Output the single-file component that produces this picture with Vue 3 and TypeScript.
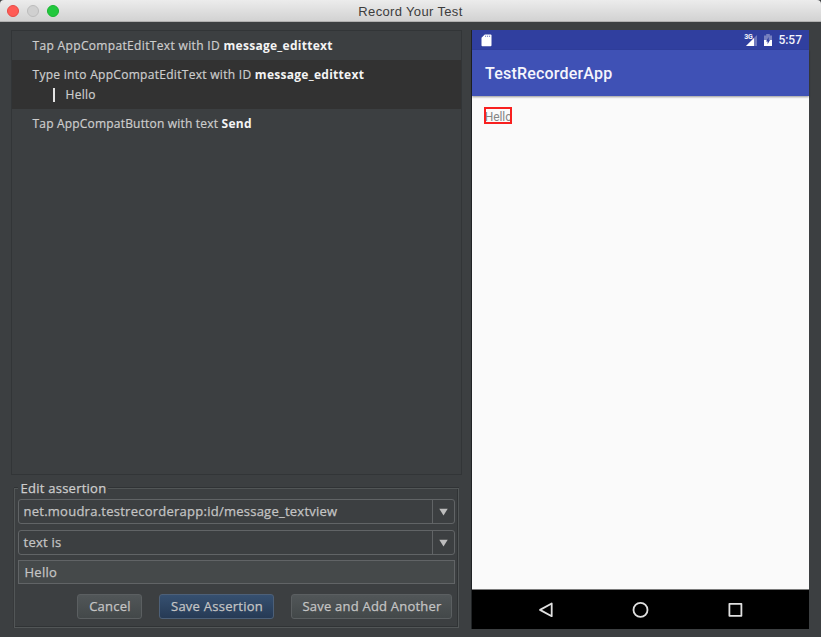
<script setup lang="ts">
interface Step {
  action: string
  target: string
  value?: string
}

const steps: Step[] = [
  { action: 'Tap AppCompatEditText with ID', target: 'message_edittext' },
  { action: 'Type into AppCompatEditText with ID', target: 'message_edittext', value: 'Hello' },
  { action: 'Tap AppCompatButton with text', target: 'Send' },
]

const combos: string[] = ['net.moudra.testrecorderapp:id/message_textview', 'text is']
</script>

<template>
  <div class="window">
    <header class="titlebar">
      <div class="lights">
        <i class="light red"></i>
        <i class="light grey"></i>
        <i class="light green"></i>
      </div>
      <span class="title">Record Your Test</span>
    </header>

    <main class="content">
      <section class="left">
        <div class="steps">
          <div v-for="(s, i) in steps" :key="i" class="step" :class="{ selected: s.value }">
            <div class="line"><span>{{ s.action }}&nbsp;</span><b>{{ s.target }}</b></div>
            <div v-if="s.value" class="line value">{{ s.value }}</div>
          </div>
        </div>

        <div class="group">
          <span class="legend">Edit assertion</span>
          <div v-for="c in combos" :key="c" class="combo">
            <span class="combo-text">{{ c }}</span>
            <span class="arrow">
              <svg width="9" height="8" viewBox="0 0 9 8"><path d="M0.3 0.8H8.7L4.5 7.5Z" fill="#bdbdbd" /></svg>
            </span>
          </div>
          <div class="field">Hello</div>
          <div class="buttons">
            <button class="btn cancel">Cancel</button>
            <button class="btn primary">Save Assertion</button>
            <button class="btn another">Save and Add Another</button>
          </div>
        </div>
      </section>

      <section class="device">
        <div class="status">
          <svg class="sd" width="11" height="13" viewBox="0 0 11 13">
            <path d="M3.8 0.5H9.6Q10.5 0.5 10.5 1.4V11.3Q10.5 12.2 9.6 12.2H1.4Q0.5 12.2 0.5 11.3V3.8Z" fill="#fff" />
            <path d="M4.6 1.6V3M6.6 1.6V3M8.6 1.6V3" stroke="#7f89c8" stroke-width="1" />
          </svg>
          <span class="net">3G</span>
          <svg class="signal" width="11" height="11" viewBox="0 0 11 11">
            <path d="M11 0V11H0Z" fill="#7079bd" />
            <path d="M8 3V11H0Z" fill="#fff" />
          </svg>
          <svg class="battery" width="8" height="12" viewBox="0 0 8 12">
            <path d="M0 1.5H2.2V0H5.8V1.5H8V6.5H0Z" fill="#7780bf" />
            <path d="M0 6H8V12H0Z" fill="#fff" />
            <path d="M4.7 3L2 7.4H3.6V10.2L6 6.1H4.7Z" fill="#303f9f" />
          </svg>
          <span class="clock">5:57</span>
        </div>
        <div class="appbar">TestRecorderApp</div>
        <div class="screen"><span class="marked">Hello</span></div>
        <nav class="nav">
          <svg width="16" height="18" viewBox="0 0 16 18"><path d="M13.7 2.5V15.2L2 8.9Z" /></svg>
          <svg width="18" height="18" viewBox="0 0 18 18"><circle cx="8.5" cy="8.9" r="7" /></svg>
          <svg width="16" height="18" viewBox="0 0 16 18"><rect x="1.4" y="2.8" width="12" height="12" /></svg>
        </nav>
      </section>
    </main>
  </div>
</template>

<style>
body { background: #3c3f41; overflow: hidden; }
</style>

<style scoped>
* { box-sizing: border-box; }
.window {
  width: 821px; height: 637px; background: #3c3f41;
  font-family: "Open Sans", "Noto Sans", sans-serif; color: #cdcdcd;
}
.titlebar {
  display: grid; grid-template-columns: 1fr auto 1fr; height: 22px;
  background: linear-gradient(#ececec, #d2d2d2);
  border-bottom: 1px solid #b0b0b0; border-radius: 4px 4px 0 0;
}
.lights { display: flex; gap: 8px; padding: 5px 0 0 7px; }
.light { width: 12px; height: 12px; border-radius: 50%; border: 1px solid; }
.red { background: #ff5c56; border-color: #e64a45; }
.grey { background: #d0d0d0; border-color: #bcbcbc; }
.green { background: #22c83e; border-color: #18b530; }
.title { font: 13px/23px "Liberation Sans", sans-serif; color: #3c3c3c; letter-spacing: 0.35px; }
.content { display: flex; gap: 10px; padding: 8px 12px 8px 11px; }
.left { width: 451px; }
.steps { height: 445px; border: 1px solid #323537; font-size: 12px; -webkit-text-stroke: 0.2px; }
.step { height: 30px; padding: 5px 0 0 20.5px; }
.step:first-child { height: 29px; letter-spacing: 0.34px; }
.step.selected { height: 49px; background: #323232; letter-spacing: 0.29px; }
.step:last-child { letter-spacing: 0.19px; }
.line { display: flex; height: 20px; line-height: 20px; white-space: nowrap; }
.line b { color: #f4f4f4; font-weight: 700; letter-spacing: 0.28px; -webkit-text-stroke: 0; }
.value { align-items: center; padding-left: 20px; }
.value::before { content: ""; width: 2px; height: 14px; margin-right: 11px; background: #e4e4e4; }
.group {
  position: relative; width: 445px; height: 140px; margin: 13px 0 0 3px; padding: 10px 4px 0 3px;
  border: 1px solid #525657; box-shadow: inset 0 -1px #303335, inset -1px 0 #303335, 0 -1px #303335, -1px 0 #37393b;
  font-size: 13px; letter-spacing: 0.25px; -webkit-text-stroke: 0.25px;
}
.legend {
  position: absolute; left: 3px; top: -11px; height: 20px; padding: 0 2px 0 2.5px; line-height: 20px;
  background: #3c3f41; white-space: nowrap;
}
.combo, .field { width: 437px; border: 1px solid #616466; color: #c4c4c4; white-space: nowrap; }
.combo { display: flex; height: 25px; margin-bottom: 6px; border-radius: 3px; line-height: 23px; }
.combo-text { flex: 1; padding-left: 4.5px; }
.arrow { display: flex; width: 22px; align-items: center; justify-content: center; border-left: 1px solid #616466; }
.field { height: 24px; margin-top: -1px; padding-left: 5.5px; line-height: 22px; background: #45494a; }
.buttons { display: flex; justify-content: flex-end; gap: 17px; padding: 10px 2px 0 0; }
.btn {
  height: 25px; padding: 0 0 2px 1px; border: 1px solid #5b5f61; border-radius: 3px;
  background: linear-gradient(#515658, #434849); color: #c4c4c4; font: inherit; letter-spacing: inherit; white-space: nowrap;
}
.cancel { width: 65px; }
.primary { width: 115px; background: linear-gradient(#365070, #263a55); border-color: #4d6078; }
.another { width: 161px; letter-spacing: 0.22px; }
.device { width: 337px; height: 599px; background: #fafafa; font-family: Roboto, sans-serif; box-shadow: -1px 0 #202325; }
.status { display: flex; height: 20px; align-items: center; padding: 0 7px 0 9px; background: #303f9f; color: #f4f4fb; }
.net { margin-left: auto; align-self: flex-start; padding-top: 4px; font-size: 7px; line-height: 7px; font-weight: 700; letter-spacing: -0.3px; }
.signal { margin-left: -6px; }
.battery { margin: 0 6px 0 7px; }
.clock { font-size: 12px; font-weight: 500; }
.appbar {
  position: relative; height: 46px; padding-left: 13px; background: #3f51b5; color: #f5f5fc;
  font-size: 16px; line-height: 47px; font-weight: 500; letter-spacing: 0.2px; box-shadow: 0 1px 2px rgba(0, 0, 0, 0.4);
}
.screen { display: flex; height: 494px; padding: 11px 12px; align-items: flex-start; background: #fafafa; border-bottom: 1px solid #7b7b7b; }
.marked { width: 28px; height: 17px; border: 2px solid #f8201f; color: #858585; font-size: 12px; font-weight: 400; line-height: 16px; text-indent: -1.2px; letter-spacing: -0.1px; overflow: hidden; }
.nav { display: flex; justify-content: center; gap: 78px; height: 39px; align-items: center; background: #000; }
.nav svg { fill: none; stroke: #e0e0e0; stroke-width: 1.8; stroke-linejoin: round; }
</style>
